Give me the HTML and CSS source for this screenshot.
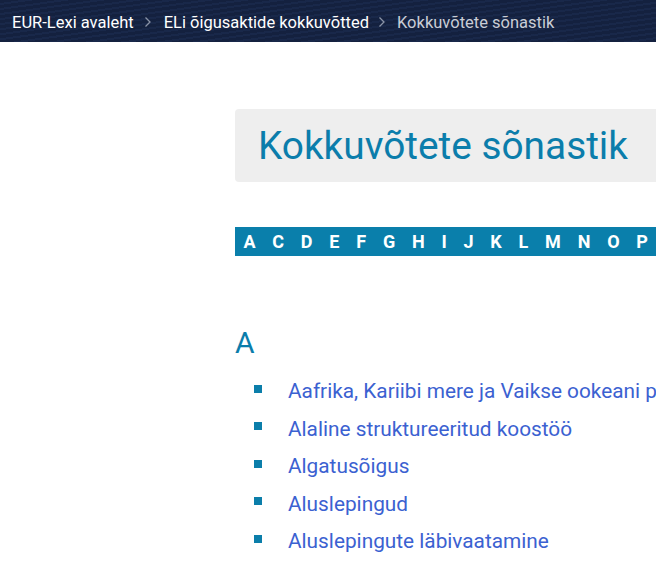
FILE: index.html
```html
<!DOCTYPE html>
<html lang="et">
<head>
<meta charset="utf-8">
<title>Kokkuvõtete sõnastik</title>
<link rel="stylesheet" href="styles.css">
</head>
<body>
<header class="topbar">
  <nav class="crumbs">
    <a class="crumb" href="#">EUR-Lexi avaleht</a>
    <svg class="chev first" width="8" height="12" viewBox="0 0 8 12"><path d="M1.5 1.5 L6 6 L1.5 10.5" fill="none" stroke="#8a93a6" stroke-width="1.3"/></svg>
    <a class="crumb" href="#">ELi õigusaktide kokkuvõtted</a>
    <svg class="chev" width="8" height="12" viewBox="0 0 8 12"><path d="M1.5 1.5 L6 6 L1.5 10.5" fill="none" stroke="#8a93a6" stroke-width="1.3"/></svg>
    <span class="crumb current">Kokkuvõtete sõnastik</span>
  </nav>
</header>
<main class="content">
  <div class="titlebox"><h1 class="title">Kokkuvõtete sõnastik</h1></div>
  <div class="alpha">
    <a href="#">A</a><a href="#">C</a><a href="#">D</a><a href="#">E</a><a href="#">F</a><a href="#">G</a><a href="#">H</a><a href="#">I</a><a href="#">J</a><a href="#">K</a><a href="#">L</a><a href="#">M</a><a href="#">N</a><a href="#">O</a><a href="#">P</a>
  </div>
  <h2 class="letter">A</h2>
  <ul class="terms">
    <li><a href="#">Aafrika, Kariibi mere ja Vaikse ookeani p</a></li>
    <li><a href="#">Alaline struktureeritud koostöö</a></li>
    <li><a href="#">Algatusõigus</a></li>
    <li><a href="#">Aluslepingud</a></li>
    <li><a href="#">Aluslepingute läbivaatamine</a></li>
  </ul>
</main>
</body>
</html>
```
FILE: styles.css
```css
html, body {
  margin: 0;
  padding: 0;
  overflow: hidden;
}
body {
  font-family: Roboto, "Liberation Sans", sans-serif;
  background: #ffffff;
  width: 656px;
}
.topbar {
  height: 42px;
  box-sizing: border-box;
  padding: 2px 0 0 12px;
  background-color: #14213f;
  background-image: repeating-linear-gradient(172deg, rgba(255,255,255,0) 0px, rgba(255,255,255,0) 3px, rgba(60,90,150,0.12) 3px, rgba(60,90,150,0.12) 5px);
  display: flex;
  align-items: center;
  white-space: nowrap;
  overflow: hidden;
}
.crumbs {
  display: flex;
  align-items: center;
  font-size: 16.5px;
}
.crumb {
  color: #ffffff;
  text-decoration: none;
}
.crumb.current {
  color: #c9cdd6;
}
.chev {
  margin: 0 11px 0 9px;
}
.chev.first {
  margin: 0 12px 0 10px;
}
.content {
  padding-left: 235px;
  padding-top: 67px;
  white-space: nowrap;
}
.titlebox {
  background: #eeeeee;
  border-radius: 4px 0 0 4px;
  height: 73px;
  display: flex;
  align-items: center;
  padding-left: 23px;
}
.title {
  margin: 0;
  font-weight: 400;
  font-size: 38.8px;
  color: #0b7dab;
  line-height: 1;
  padding-top: 2px;
}
.alpha {
  margin-top: 45px;
  height: 29px;
  background: #0a7fab;
  display: flex;
  align-items: center;
  overflow: hidden;
}
.alpha a {
  color: #ffffff;
  font-weight: 700;
  font-size: 18px;
  text-decoration: none;
  padding: 0 8.4px;
}
.letter {
  margin: 69px 0 0 0;
  font-weight: 400;
  font-size: 30px;
  color: #0b7dab;
  line-height: 35px;
}
.terms {
  list-style: none;
  margin: 13px 0 0 0;
  padding: 0 0 0 19px;
}
.terms li {
  display: flex;
  align-items: center;
  font-size: 20.8px;
  line-height: 37.5px;
}
.terms li::before {
  content: "";
  width: 8px;
  height: 8px;
  background: #0b7eaa;
  margin-right: 26px;
  flex: none;
  position: relative;
  top: -3px;
}
.terms a {
  color: #3b61d1;
  text-decoration: none;
}
```
